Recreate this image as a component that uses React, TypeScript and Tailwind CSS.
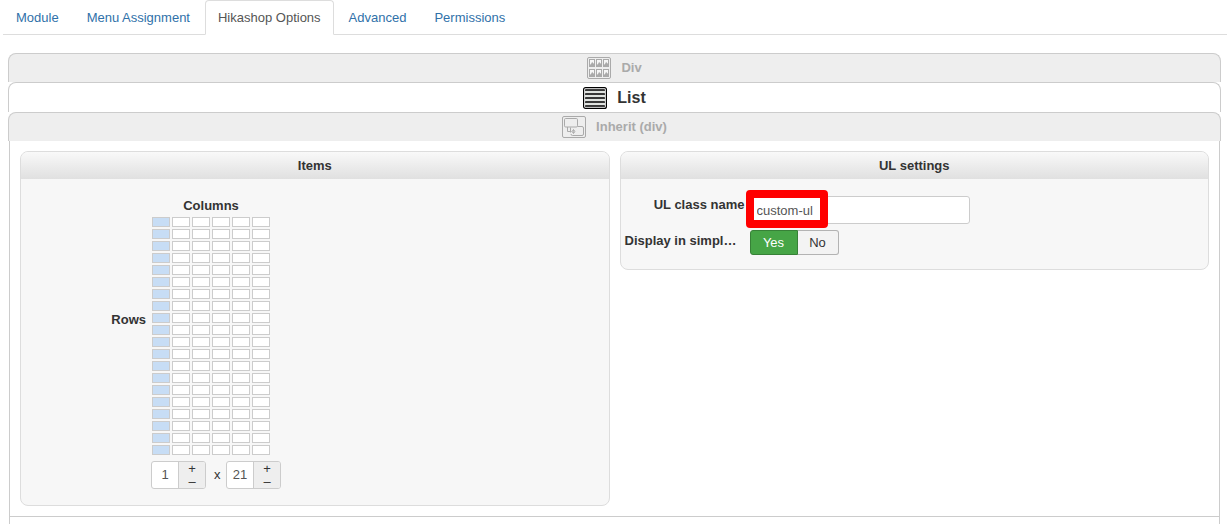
import { useState } from "react";
import type { ReactNode } from "react";
import clsx from "clsx";

const tabs = [
  "Module",
  "Menu Assignment",
  "Hikashop Options",
  "Advanced",
  "Permissions"
];

const GRID_COLUMNS = 6;
const GRID_ROWS = 20;

const DivIcon = () => (
  <svg width="24" height="22" viewBox="0 0 24 22" fill="none">
    <rect x="0.5" y="0.5" width="23" height="21" rx="1.5" stroke="currentColor" />
    {[2, 12].map((y) =>
      [2, 9, 16].map((x) => (
        <g key={`${x}-${y}`}>
          <rect x={x + 0.5} y={y + 0.5} width="5" height="7" fill="#f6f6f6" stroke="currentColor" />
          <path
            d={`M${x + 1} ${y + 7.5}v-1.8l1-.7 1.2-2.2 1 1.7.8-.3v3.3z`}
            fill="currentColor"
          />
        </g>
      ))
    )}
  </svg>
);

const ListIcon = () => (
  <svg width="24" height="22" viewBox="0 0 24 22" fill="none">
    <rect x="0.6" y="0.6" width="22.8" height="20.8" rx="2" fill="#fff" stroke="#000" strokeWidth="1.2" />
    <path d="M2 3h20v16H2z" fill="#e0e3e0" />
    <path
      d="M2.8 3h18.4M2.8 7h18.4M2.8 11h18.4M2.8 15h18.4M2.8 19h18.4"
      stroke="#000"
      strokeWidth="1.7"
      strokeLinecap="round"
    />
  </svg>
);

const InheritIcon = () => (
  <svg width="24" height="22" viewBox="0 0 24 22" fill="none" stroke="currentColor">
    <rect x="0.5" y="0.5" width="23" height="21" rx="1.5" />
    <rect x="2.5" y="2.5" width="13" height="8.5" rx="1.2" />
    <path d="M15.5 10.5h4.5a1.5 1.5 0 0 1 1.5 1.5v6a1.5 1.5 0 0 1-1.5 1.5h-9.5a1.5 1.5 0 0 1-1.5-1.5" />
    <path d="M5.5 11v4.5h4M8.5 11.5v5" />
    <path d="M11.5 13v5" strokeWidth="0.7" />
    <circle cx="11.5" cy="15.5" r="1.3" />
  </svg>
);

const layouts = [
  { id: "div", label: "Div", Icon: DivIcon },
  { id: "list", label: "List", Icon: ListIcon },
  { id: "inherit", label: "Inherit (div)", Icon: InheritIcon }
];

const Panel = ({ title, children }: { title: string; children: ReactNode }) => (
  <section className="min-w-0 flex-1 overflow-hidden rounded-lg border border-[#ddd] bg-[#f7f7f7]">
    <h2 className="h-[27px] bg-linear-to-b from-[#f9f9f9] to-[#e0e0e0] text-center font-bold leading-[27px]">
      {title}
    </h2>
    {children}
  </section>
);

type StepperProps = {
  label: string;
  value: number;
  onChange: (value: number) => void;
};

const Stepper = ({ label, value, onChange }: StepperProps) => (
  <div className="flex h-7 w-[55px] overflow-hidden rounded-[3px] border border-[#ccc] bg-white">
    <input
      aria-label={label}
      className="w-[26px] text-center text-[#555] outline-none"
      value={value}
      onChange={(e) => onChange(Number(e.target.value) || 1)}
    />
    <div className="flex flex-1 flex-col border-l border-[#ccc] bg-[#eee]">
      <button type="button" className="h-[13px] leading-[13px]" onClick={() => onChange(value + 1)}>
        +
      </button>
      <button
        type="button"
        className="h-[13px] leading-[13px]"
        onClick={() => onChange(Math.max(1, value - 1))}
      >
        –
      </button>
    </div>
  </div>
);

const ItemsPanel = () => {
  const [columns, setColumns] = useState(1);
  const [rows, setRows] = useState(21);

  return (
    <Panel title="Items">
      <div className="grid grid-cols-[125px_auto] justify-start gap-x-1.5 pt-[18px] pb-1.5">
        <div className="col-start-2 text-center font-bold">Columns</div>
        <div className="pt-24 text-right font-bold">Rows</div>
        <div className="grid grid-cols-[repeat(6,18px)] gap-0.5 pt-0.5">
          {Array.from({ length: GRID_ROWS * GRID_COLUMNS }, (_, i) => {
            const column = (i % GRID_COLUMNS) + 1;
            const row = Math.floor(i / GRID_COLUMNS) + 1;
            return (
              <button
                key={i}
                type="button"
                aria-label={`${column} x ${row}`}
                className={clsx(
                  "h-2.5 border border-[#ccc]",
                  column <= columns && row <= rows ? "bg-[#c7ddf5]" : "bg-white"
                )}
                onClick={() => {
                  setColumns(column);
                  setRows(row);
                }}
              />
            );
          })}
        </div>
      </div>
      <div className="flex items-center pb-4 pl-[130px]">
        <Stepper label="Columns" value={columns} onChange={setColumns} />
        <span className="w-5 pl-2">x</span>
        <Stepper label="Rows" value={rows} onChange={setRows} />
      </div>
    </Panel>
  );
};

const UlSettingsPanel = () => {
  const [className, setClassName] = useState("custom-ul");
  const [simplified, setSimplified] = useState(true);

  return (
    <Panel title="UL settings">
      <div className="flex flex-col gap-1.5 pt-[17px] pr-5 pb-3.5 pl-1">
        <div className="flex gap-[5px]">
          <label htmlFor="ul-class" className="w-[120px] text-right font-bold">
            UL class name
          </label>
          <div className="relative">
            <input
              id="ul-class"
              className="h-7 w-[220px] rounded-[3px] border border-[#ccc] bg-white px-1.5 text-[#555] outline-none"
              value={className}
              onChange={(e) => setClassName(e.target.value)}
            />
            <div className="pointer-events-none absolute -top-1.5 -left-1 h-[38px] w-[82px] rounded-sm border-8 border-[#f00]" />
          </div>
        </div>
        <div className="flex gap-[5px]">
          <span className="w-[120px] pt-0.5 font-bold">Display in simpl…</span>
          <div className="flex h-[25px]">
            <button
              type="button"
              aria-pressed={simplified}
              className="w-12 rounded-l-[3px] border border-[#378137] bg-[#46a546] text-white"
              onClick={() => setSimplified(true)}
            >
              Yes
            </button>
            <button
              type="button"
              aria-pressed={!simplified}
              className="w-[41px] rounded-r-[3px] border border-l-0 border-[#b3b3b3] bg-[#f3f3f3]"
              onClick={() => setSimplified(false)}
            >
              No
            </button>
          </div>
        </div>
      </div>
    </Panel>
  );
};

export default function App() {
  const [layout, setLayout] = useState("list");

  return (
    <div className="bg-white font-['Liberation_Sans',Arial,sans-serif] text-[13px] leading-[18px] text-[#333]">
      <nav className="mr-1 ml-[3px] flex gap-0.5 border-b border-[#ddd]">
        {tabs.map((tab) => (
          <a
            key={tab}
            href="#"
            className={clsx(
              "-mb-px rounded-t border px-3 pt-2 pb-[7px]",
              tab === "Hikashop Options"
                ? "border-[#ddd] border-b-white bg-white text-[#555]"
                : "border-transparent text-[#3071a9]"
            )}
          >
            {tab}
          </a>
        ))}
      </nav>

      <main className="mt-[18px] mr-2.5 ml-2">
        {layouts.map(({ id, label, Icon }) => (
          <button
            key={id}
            type="button"
            className={clsx(
              "flex w-full items-center justify-center gap-2.5 rounded-t-lg border border-b-0 border-[#ccc] font-bold",
              id === layout ? "h-[30px] bg-white text-base" : "h-[29px] bg-[#eee] text-[#aaa]"
            )}
            onClick={() => setLayout(id)}
          >
            <Icon />
            {label}
          </button>
        ))}

        <div className="mx-px border-x border-[#ccc] pb-[7px]">
          <div className="flex items-start gap-2.5 border-b border-[#ccc] p-2.5">
            <ItemsPanel />
            <UlSettingsPanel />
          </div>
        </div>
      </main>
    </div>
  );
}
